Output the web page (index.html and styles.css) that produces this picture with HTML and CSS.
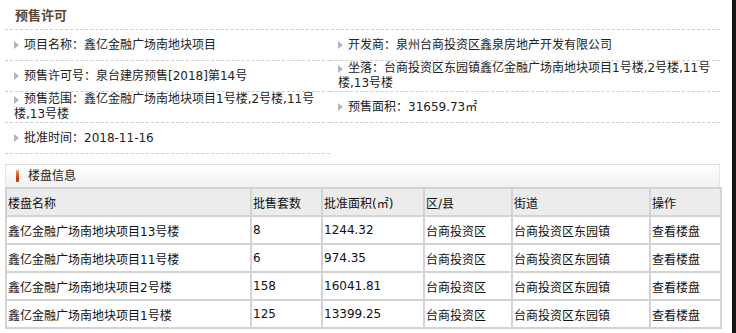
FILE: index.html
```html
<!DOCTYPE html>
<html lang="zh-CN">
<head>
<meta charset="utf-8">
<title>预售许可</title>
<link rel="stylesheet" href="styles.css">
</head>
<body>
<div class="page">
  <h2 class="title">预售许可</h2>
  <div class="info">
    <div class="cell left"><i class="tri"></i>项目名称：鑫亿金融广场南地块项目</div>
    <div class="cell right"><i class="tri"></i>开发商：泉州台商投资区鑫泉房地产开发有限公司</div>
    <div class="cell left"><i class="tri"></i>预售许可号：泉台建房预售[2018]第14号</div>
    <div class="cell right"><span><i class="tri"></i>坐落：台商投资区东园镇鑫亿金融广场南地块项目1号楼,2号楼,11号楼,13号楼</span></div>
    <div class="cell left"><span><i class="tri"></i>预售范围：鑫亿金融广场南地块项目1号楼,2号楼,11号楼,13号楼</span></div>
    <div class="cell right"><i class="tri"></i>预售面积：31659.73㎡</div>
    <div class="cell left"><i class="tri"></i>批准时间：2018-11-16</div>
    <div class="cell empty"></div>
  </div>
  <div class="box">
    <div class="box-head"><i class="bar"></i>楼盘信息</div>
    <table class="list">
      <colgroup>
        <col class="c1"><col class="c2"><col class="c3"><col class="c4"><col class="c5"><col class="c6">
      </colgroup>
      <thead>
        <tr><th>楼盘名称</th><th>批售套数</th><th>批准面积(㎡)</th><th>区/县</th><th>街道</th><th>操作</th></tr>
      </thead>
      <tbody>
        <tr><td>鑫亿金融广场南地块项目13号楼</td><td>8</td><td>1244.32</td><td>台商投资区</td><td>台商投资区东园镇</td><td>查看楼盘</td></tr>
        <tr><td>鑫亿金融广场南地块项目11号楼</td><td>6</td><td>974.35</td><td>台商投资区</td><td>台商投资区东园镇</td><td>查看楼盘</td></tr>
        <tr><td>鑫亿金融广场南地块项目2号楼</td><td>158</td><td>16041.81</td><td>台商投资区</td><td>台商投资区东园镇</td><td>查看楼盘</td></tr>
        <tr><td>鑫亿金融广场南地块项目1号楼</td><td>125</td><td>13399.25</td><td>台商投资区</td><td>台商投资区东园镇</td><td>查看楼盘</td></tr>
      </tbody>
    </table>
  </div>
</div>
</body>
</html>
```

FILE: styles.css
```css
html, body {
  margin: 0;
  padding: 0;
  background: #fff;
}
body {
  font-family: "DejaVu Sans", "Noto Sans CJK SC", sans-serif;
  font-size: 12px;
  color: #222;
}
.page {
  width: 732px;
  height: 333px;
  border-right: 4px solid #151515;
  overflow: hidden;
}
.title {
  margin: 0 0 0 5px;
  height: 29px;
  line-height: 29px;
  padding-left: 10px;
  width: 705px;
  font-family: "Noto Sans CJK SC", sans-serif;
  font-size: 13px;
  font-weight: bold;
  color: #5a4830;
  border-bottom: 1px dashed #cfcfcf;
}
.info {
  display: grid;
  grid-template-columns: 325px 390px;
  margin-left: 5px;
}
.cell {
  min-height: 30px;
  line-height: 15px;
  display: flex;
  align-items: center;
  border-bottom: 1px dashed #cfcfcf;
}
.cell.left {
  padding: 0 10px 0 9px;
}
.cell.right {
  padding: 0 4px 0 8px;
}
.cell.empty {
  border-bottom: none;
}
.tri {
  display: inline-block;
  width: 0;
  height: 0;
  border-left: 5px solid #b5b5b5;
  border-top: 4.5px solid transparent;
  border-bottom: 4.5px solid transparent;
  margin-right: 5px;
  vertical-align: -1px;
}
.box {
  margin: 10px 0 0 5px;
  width: 715px;
  border-top: 1px solid #dedede;
}
.box-head {
  height: 22px;
  line-height: 22px;
  padding-left: 10px;
  background: linear-gradient(#ffffff, #f1f1f1);
  border-left: 1px solid #e6e6e6;
  border-right: 1px solid #e6e6e6;
  color: #222;
  display: flex;
  align-items: center;
}
.bar {
  display: inline-block;
  width: 3px;
  height: 12px;
  margin-right: 9px;
  background: linear-gradient(#f2a05a, #d2461e 60%, #a8321a);
  border-radius: 1px;
}
.list {
  width: 715px;
  table-layout: fixed;
  border-collapse: collapse;
}
.c1 { width: 245px; }
.c2 { width: 71px; }
.c3 { width: 102px; }
.c4 { width: 88px; }
.c5 { width: 138px; }
.c6 { width: 71px; }
.list th,
.list td {
  border: 2px solid #d3d3d3;
  height: 26px;
  padding: 0 0 0 1px;
  text-align: left;
  font-weight: normal;
  color: #111;
  white-space: nowrap;
  overflow: hidden;
}
.list th {
  background: #ececec;
}
.list td {
  background: #fff;
}
```
